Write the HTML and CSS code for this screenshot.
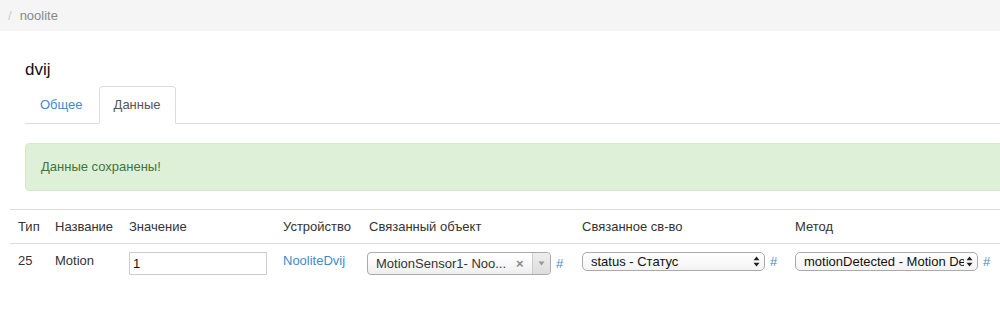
FILE: index.html
```html
<!DOCTYPE html>
<html lang="ru">
<head>
  <meta charset="UTF-8">
  <title>noolite</title>
  <link rel="stylesheet" href="styles.css">
</head>
<body>
  <div class="breadcrumb">
    <span class="crumb-sep">/</span>
    <span class="crumb-active">noolite</span>
  </div>

  <div class="content">
    <h4 class="title">dvij</h4>

    <ul class="tabs">
      <li class="tab"><a href="#">Общее</a></li>
      <li class="tab active"><a href="#">Данные</a></li>
    </ul>

    <div class="alert">Данные сохранены!</div>
  </div>

  <!-- таблица свойств -->
  <table class="props">
    <colgroup>
      <col style="width:37px">
      <col style="width:74px">
      <col style="width:154px">
      <col style="width:86px">
      <col style="width:213px">
      <col style="width:213px">
      <col>
    </colgroup>
    <thead>
      <tr>
        <th>Тип</th>
        <th>Название</th>
        <th>Значение</th>
        <th>Устройство</th>
        <th>Связанный объект</th>
        <th>Связанное св-во</th>
        <th>Метод</th>
      </tr>
    </thead>
    <tbody>
      <tr>
        <td>25</td>
        <td>Motion</td>
        <td><input type="text" class="value-input" value="1"></td>
        <td><a href="#" class="link">NooliteDvij</a></td>
        <td>
          <div class="field">
            <div class="select2">
              <span class="select2-text">MotionSensor1- Noo...</span>
              <span class="select2-clear">×</span>
              <span class="select2-arrow">
                <svg width="7" height="5" viewBox="0 0 7 5"><path d="M0.5 0.5 L6.5 0.5 L3.5 4.5 Z" fill="#999"/></svg>
              </span>
            </div>
            <a href="#" class="hash">#</a>
          </div>
        </td>
        <td>
          <div class="field">
            <div class="mac-select">
              <span class="mac-select-text">status - Статус</span>
              <svg class="updown" width="7" height="11" viewBox="0 0 7 11"><path d="M3.5 0.5 L6.5 4.3 L0.5 4.3 Z M3.5 10.5 L6.5 6.7 L0.5 6.7 Z" fill="#222"/></svg>
            </div>
            <a href="#" class="hash">#</a>
          </div>
        </td>
        <td>
          <div class="field">
            <div class="mac-select">
              <span class="mac-select-text">motionDetected - Motion De</span>
              <svg class="updown" width="7" height="11" viewBox="0 0 7 11"><path d="M3.5 0.5 L6.5 4.3 L0.5 4.3 Z M3.5 10.5 L6.5 6.7 L0.5 6.7 Z" fill="#222"/></svg>
            </div>
            <a href="#" class="hash">#</a>
          </div>
        </td>
      </tr>
    </tbody>
  </table>
</body>
</html>
```

FILE: styles.css
```css
body {
  margin: 0;
  padding: 0;
  width: 1000px;
  overflow: hidden;
  font-family: "Liberation Sans", Arial, Helvetica, sans-serif;
  font-size: 13px;
  line-height: 17px;
  color: #333;
  background: #fff;
}
a {
  color: #428bca;
  text-decoration: none;
}

/* хлебные крошки */
.breadcrumb {
  height: 31px;
  background: #f5f5f5;
  padding-left: 8px;
  display: flex;
  align-items: center;
  gap: 8px;
}
.crumb-sep { color: #ccc; }
.crumb-active { color: #888; }

.content {
  padding-left: 25px;
  width: 1100px;
}
.title {
  margin: 0;
  padding-top: 28px;
  font-size: 17px;
  font-weight: normal;
  line-height: 22px;
  color: #111;
}

/* вкладки */
.tabs {
  list-style: none;
  margin: 5px 0 0 0;
  padding: 0;
  display: flex;
  border-bottom: 1px solid #ddd;
}
.tab {
  margin-right: 1px;
  margin-bottom: -1px;
}
.tab a {
  display: block;
  padding: 9px 14px 10px 14px;
  border: 1px solid transparent;
  border-radius: 4px 4px 0 0;
}
.tab.active a {
  color: #555;
  background: #fff;
  border-color: #ddd #ddd transparent #ddd;
}

.alert {
  margin-top: 19px;
  padding: 14px 15px 15px 15px;
  background: #dff0d8;
  border: 1px solid #d6e9c6;
  border-radius: 4px;
  color: #3c763d;
}

/* таблица */
.props {
  margin: 18px 0 0 10px;
  width: 1100px;
  table-layout: fixed;
  border-collapse: collapse;
  border-top: 1px solid #ddd;
}
.props th,
.props td {
  padding: 8px;
  text-align: left;
  vertical-align: top;
  white-space: nowrap;
}
.props th {
  font-weight: normal;
  border-bottom: 1px solid #ddd;
}
.value-input {
  box-sizing: border-box;
  width: 138px;
  height: 23px;
  margin: 0;
  padding: 2px 3px;
  border: 1px solid #ccc;
  font-family: inherit;
  font-size: 13px;
  color: #111;
  outline: none;
}

.field {
  display: flex;
  align-items: center;
  gap: 5px;
}
.hash {
  font-size: 13px;
}

.select2 {
  box-sizing: border-box;
  width: 184px;
  height: 23px;
  margin-left: -2px;
  display: flex;
  align-items: center;
  border: 1px solid #aaa;
  border-radius: 4px;
  background: linear-gradient(#fff 20%, #eee);
  color: #333;
}
.select2-text {
  flex: 1;
  padding-left: 8px;
  overflow: hidden;
}
.select2-clear {
  color: #888;
  font-size: 13px;
  font-weight: bold;
  width: 14px;
}
.select2-arrow {
  align-self: stretch;
  width: 17px;
  margin-left: 2px;
  display: flex;
  align-items: center;
  justify-content: center;
  border-left: 1px solid #ccc;
  border-radius: 0 4px 4px 0;
  background: linear-gradient(#eee, #ddd);
}

.mac-select {
  box-sizing: border-box;
  width: 183px;
  height: 19px;
  display: flex;
  align-items: center;
  border: 1px solid #aaa;
  border-radius: 5px;
  background: linear-gradient(#fff, #f3f3f3);
  color: #111;
  padding: 0 4px 0 8px;
}
.mac-select-text {
  flex: 1;
  min-width: 0;
  overflow: hidden;
  white-space: nowrap;
}
.updown {
  flex: none;
  margin-left: 2px;
}
```
